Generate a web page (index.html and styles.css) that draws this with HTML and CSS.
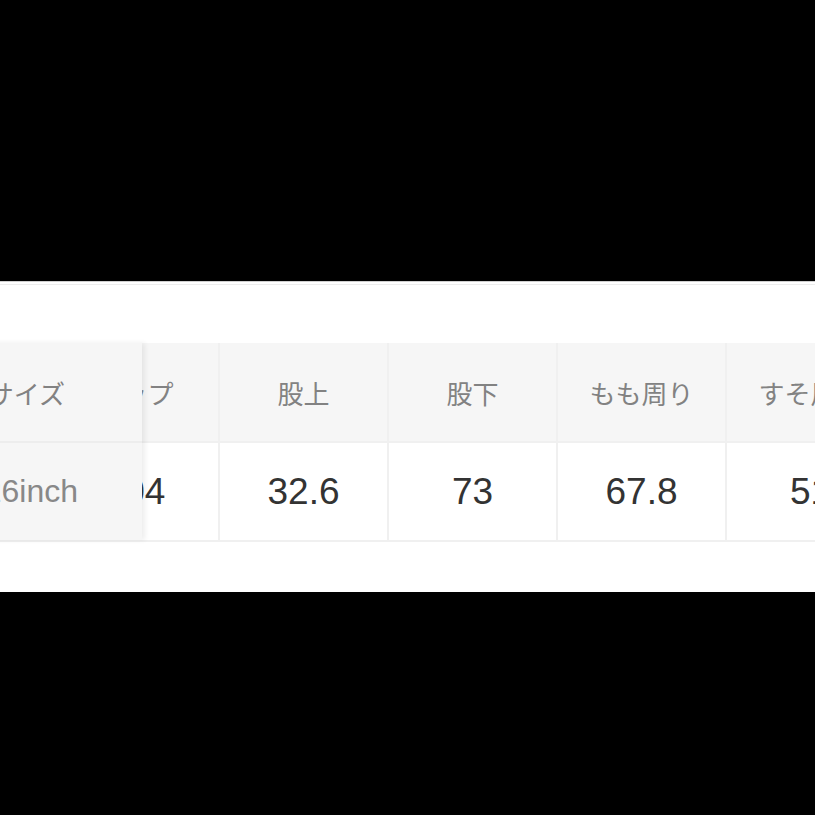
FILE: index.html
```html
<!DOCTYPE html>
<html lang="ja">
<head>
<meta charset="utf-8">
<title>サイズ表</title>
<link rel="stylesheet" href="styles.css">
</head>
<body>
<div class="screen">
  <div class="bar"></div>
  <section class="panel">
    <div class="table">
      <div class="sticky">
        <div class="cell head size-head">サイズ</div>
        <div class="cell size-val">26inch</div>
      </div>
      <div class="scroll">
        <div class="col">
          <div class="cell head">ヒップ</div>
          <div class="cell val">104</div>
        </div>
        <div class="col">
          <div class="cell head">股上</div>
          <div class="cell val">32.6</div>
        </div>
        <div class="col">
          <div class="cell head">股下</div>
          <div class="cell val">73</div>
        </div>
        <div class="col">
          <div class="cell head">もも周り</div>
          <div class="cell val">67.8</div>
        </div>
        <div class="col">
          <div class="cell head">すそ周り</div>
          <div class="cell val">51</div>
        </div>
      </div>
    </div>
  </section>
  <div class="bar bar-bottom"></div>
</div>
</body>
</html>
```

FILE: styles.css
```css
html, body {
  margin: 0;
  padding: 0;
  background: #000;
  overflow: hidden;
}

.screen {
  width: 815px;
  height: 815px;
  display: flex;
  flex-direction: column;
  background: #000;
}

.bar {
  height: 281px;
  flex: none;
  background: #000;
}

.bar-bottom {
  flex: 1;
}

.panel {
  height: 311px;
  flex: none;
  box-sizing: border-box;
  background: #fff;
  border-top: 1px solid #cfcfcf;
  box-shadow: inset 0 2px 0 #fff, inset 0 3px 0 #ededed;
  padding-top: 61px;
  overflow: hidden;
}

.table {
  display: flex;
  align-items: stretch;
  margin-left: -60px;
  width: max-content;
  background: #f0f0f0;
  padding-bottom: 2px;
}

.sticky {
  position: relative;
  z-index: 2;
  width: 202px;
  flex: none;
  display: flex;
  flex-direction: column;
  gap: 2px;
  background: #ededed;
  box-shadow: 3px 0 5px rgba(0, 0, 0, 0.07);
}

.scroll {
  display: flex;
  gap: 2px;
  margin-left: -91px;
}

.col {
  width: 167px;
  flex: none;
  display: flex;
  flex-direction: column;
  gap: 2px;
}

.cell {
  display: flex;
  align-items: center;
  justify-content: center;
  white-space: nowrap;
}

.head {
  height: 98px;
  background: #f6f6f6;
  color: #828282;
  font-family: "Noto Sans CJK JP", "Liberation Sans", sans-serif;
  font-size: 26px;
}

.val {
  height: 97px;
  background: #fff;
  color: #333;
  font-family: "Liberation Sans", Arial, sans-serif;
  font-size: 37px;
}

.size-head {
  justify-content: flex-end;
  padding-right: 77px;
  background: #f6f6f6;
}

.size-val {
  height: 97px;
  justify-content: flex-end;
  padding-right: 64px;
  background: #f6f6f6;
  color: #888;
  font-family: "Liberation Sans", Arial, sans-serif;
  font-size: 32px;
}
```
